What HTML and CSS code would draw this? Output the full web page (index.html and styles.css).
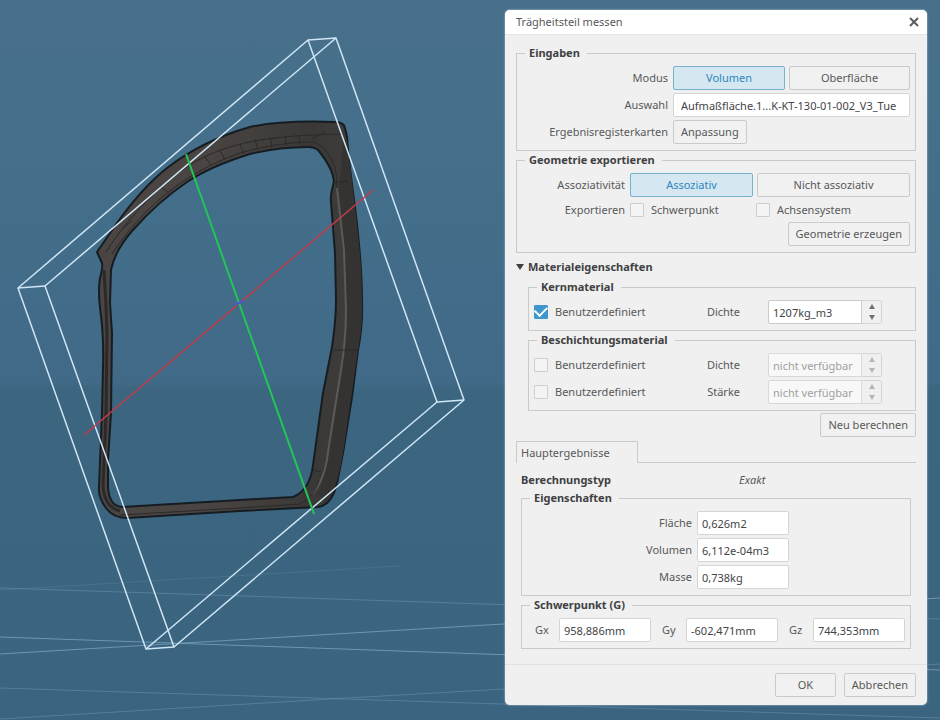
FILE: index.html
```html
<!DOCTYPE html>
<html lang="de">
<head>
  <meta charset="UTF-8">
  <meta name="viewport" content="width=device-width, initial-scale=1.0">
  <title>Trägheitsteil messen</title>
  <link rel="stylesheet" href="styles.css">
</head>
<body>
  <main class="viewport">
    <!-- 3D view: floor grid, door frame, bounding box and inertia axes -->
    <svg class="scene" viewBox="0 0 940 720" preserveAspectRatio="xMinYMin slice" aria-hidden="true">
      <defs>
        <linearGradient id="arch" x1="0" y1="0" x2="1" y2="0">
          <stop offset="0" stop-color="#4a4542"/>
          <stop offset="0.4" stop-color="#4a4542"/>
          <stop offset="0.8" stop-color="#3a3837"/>
          <stop offset="1" stop-color="#403e3d"/>
        </linearGradient>
      </defs>
      <g class="grid">
        <path class="faint" d="M0 590L400 566"/>
        <path d="M0 588L940 619"/>
        <path class="strong" d="M0 637L940 670"/>
        <path class="strong" d="M0 654L940 598"/>
        <path d="M0 688L940 718"/>
        <path d="M0 719L330 699L940 664"/>
      </g>
      <g class="frame">
        <path class="body" fill="url(#arch)" fill-rule="evenodd" d="M97 252L117 223C132 202 148 183 167 168C193 148 222 135 250 127C277 121 305 121 335 122Q344 122 345 128L347 137C349 165 352 185 355 207C359 240 362 270 362 300Q363 325 358 350L352 397L343 453L337 483Q332 505 318 507L240 511L127 518Q113 518 106 508Q98 497 99 487L102 413L103 367Q104 335 100 308Q98 290 100 278Q103 268 102 263Z
          M250 154C224 162 205 170 187 182C165 197 148 213 133 230Q115 250 111 270L110 303L112 333L111 413L108 460V487Q109 506 122 507L240 500L293 497Q310 490 313 465L323 393L332 347Q336 320 336 300L335 253L331 202Q330 196 334 182Q333 168 318 150Q314 147 308 147Q278 147 250 154Z"/>
        <path class="dark" d="M343 140L347 139L355 207C359 240 362 270 362 300Q363 325 358 350L343 453Q337 490 326 503L318 494Q325 480 328 452L341 370Q346 340 346 310L344 250L339 190Z"/>
        <path class="light" d="M337 188L344 250L346 310Q346 340 341 370L328 452Q325 480 312 494"/>
        <path class="ridge" d="M106 252C125 222 152 192 185 168C215 148 250 138 312 135L343 134"/>
        <path class="ridge" d="M112 254C140 212 180 174 240 153Q275 143 308 142Q318 141 326 151Q338 164 337 188"/>
        <path class="ridge side" d="M104 270Q106 300 107 333L106 413L103 485Q104 507 120 511"/>
        <path class="ridge" d="M120 515L240 508L300 504Q314 497 319 480"/>
        <path class="ridge" d="M332 183L348 181M334 350H358M312 139L325 132M313 470L321 472M122 229L132 221M160 186L169 193M205 157L211 165M220 150L225 160M240 144L244 154M255 139L258 150M270 137L272 148M285 136L286 146M299 135L300 145"/>
      </g>
      <g class="bbox">
        <path d="M18 288L308 40L437 402L146 649Z"/>
        <path d="M45 286L336 38L464 400L174 647Z"/>
        <path d="M18 288L45 286M308 40L336 38M437 402L464 400M146 649L174 647"/>
      </g>
      <path class="axis-x" d="M373 190L84 435"/>
      <path class="axis-y" d="M186 154L314 514"/>
      <path class="axis-z" d="M235 305L243 301"/>
    </svg>

    <form class="dialog" role="dialog" aria-labelledby="dialogTitle">
      <header class="titlebar">
        <h1 id="dialogTitle">Trägheitsteil messen</h1>
        <button type="button" class="close" aria-label="Schließen">
          <svg viewBox="0 0 10 10" width="10" height="10"><path d="M1 1L9 9M9 1L1 9"/></svg>
        </button>
      </header>

      <div class="content">
        <fieldset class="inputs">
          <legend>Eingaben</legend>
          <span class="label">Modus</span>
          <div class="segmented">
            <button type="button" class="btn active" aria-pressed="true">Volumen</button>
            <button type="button" class="btn" aria-pressed="false">Oberfläche</button>
          </div>
          <label class="label" for="selection">Auswahl</label>
          <input type="text" id="selection" class="selection" value="Aufmaßfläche.1...K-KT-130-01-002_V3_Tue">
          <span class="label">Ergebnisregisterkarten</span>
          <div><button type="button" class="btn">Anpassung</button></div>
        </fieldset>

        <fieldset class="export">
          <legend>Geometrie exportieren</legend>
          <span class="label">Assoziativität</span>
          <div class="segmented">
            <button type="button" class="btn active" aria-pressed="true">Assoziativ</button>
            <button type="button" class="btn" aria-pressed="false">Nicht assoziativ</button>
          </div>
          <span class="label">Exportieren</span>
          <div class="checks">
            <label class="check"><input type="checkbox">Schwerpunkt</label>
            <label class="check"><input type="checkbox">Achsensystem</label>
          </div>
          <div class="actions"><button type="button" class="btn">Geometrie erzeugen</button></div>
        </fieldset>

        <details class="material" open>
          <summary>Materialeigenschaften</summary>
          <fieldset class="rows">
            <legend>Kernmaterial</legend>
            <div class="material-row">
              <label class="check"><input type="checkbox" checked>Benutzerdefiniert</label>
              <label class="label" for="coreDensity">Dichte</label>
              <div class="spin">
                <input type="text" id="coreDensity" value="1207kg_m3">
                <div class="arrows">
                  <button type="button" class="up" aria-label="Erhöhen"></button>
                  <button type="button" class="down" aria-label="Verringern"></button>
                </div>
              </div>
            </div>
          </fieldset>
          <fieldset class="rows">
            <legend>Beschichtungsmaterial</legend>
            <div class="material-row">
              <label class="check"><input type="checkbox">Benutzerdefiniert</label>
              <label class="label" for="coatDensity">Dichte</label>
              <div class="spin">
                <input type="text" id="coatDensity" value="nicht verfügbar" disabled>
                <div class="arrows">
                  <button type="button" class="up" aria-label="Erhöhen" disabled></button>
                  <button type="button" class="down" aria-label="Verringern" disabled></button>
                </div>
              </div>
            </div>
            <div class="material-row">
              <label class="check"><input type="checkbox">Benutzerdefiniert</label>
              <label class="label" for="coatThickness">Stärke</label>
              <div class="spin">
                <input type="text" id="coatThickness" value="nicht verfügbar" disabled>
                <div class="arrows">
                  <button type="button" class="up" aria-label="Erhöhen" disabled></button>
                  <button type="button" class="down" aria-label="Verringern" disabled></button>
                </div>
              </div>
            </div>
          </fieldset>
          <div class="actions"><button type="button" class="btn">Neu berechnen</button></div>
        </details>

        <div class="tabs" role="tablist">
          <button type="button" class="tab" role="tab" aria-selected="true">Hauptergebnisse</button>
        </div>

        <div class="results" role="tabpanel">
          <p class="calc-type"><strong>Berechnungstyp</strong><em>Exakt</em></p>
          <fieldset class="properties">
            <legend>Eigenschaften</legend>
            <label class="label" for="area">Fläche</label>
            <input type="text" id="area" value="0,626m2" readonly>
            <label class="label" for="volume">Volumen</label>
            <input type="text" id="volume" value="6,112e-04m3" readonly>
            <label class="label" for="mass">Masse</label>
            <input type="text" id="mass" value="0,738kg" readonly>
          </fieldset>
          <fieldset>
            <legend>Schwerpunkt (G)</legend>
            <div class="gravity">
              <label class="axis">Gx <input type="text" value="958,886mm" readonly></label>
              <label class="axis">Gy <input type="text" value="-602,471mm" readonly></label>
              <label class="axis">Gz <input type="text" value="744,353mm" readonly></label>
            </div>
          </fieldset>
        </div>
      </div>

      <footer class="footer">
        <button type="button" class="btn ok">OK</button>
        <button type="button" class="btn">Abbrechen</button>
      </footer>
    </form>
  </main>
</body>
</html>
```
FILE: styles.css
```css
:root {
  --panel: #f0f0f0;
  --line: #c9cbcb;
  --text: #585959;
  --strong: #404142;
  --blue: #2f86bd;
}

* {
  box-sizing: border-box;
}

body {
  margin: 0;
  background: #3b637f;
  color: var(--text);
  font: 11px/16px "Noto Sans", "Open Sans", sans-serif;
}

/* The dialog and the 3D view share one grid cell */
.viewport {
  display: grid;
  min-height: 100vh;
  overflow: hidden;
  background: linear-gradient(#48708b, #436e8a 30%, #406a87 53%, #3c6580 54%, #3b6480);
}
.scene,
.dialog {
  grid-area: 1 / 1;
}
.scene {
  width: 100%;
  height: 100vh;
}
.scene path {
  stroke-linejoin: round;
}
.grid path {
  fill: none;
  stroke: #6890aa;
  stroke-opacity: 0.6;
}
.grid .faint {
  stroke-opacity: 0.3;
}
.grid .strong {
  stroke: #7ba2bb;
  stroke-opacity: 0.8;
}
.frame .body {
  stroke: #161d22;
  stroke-width: 2;
}
.frame .dark {
  fill: #353332;
}
.frame .light {
  fill: none;
  stroke: #5c5957;
  stroke-width: 2;
}
.frame .ridge {
  fill: none;
  stroke: #2b2929;
}
.frame .side {
  stroke-width: 3;
}
.bbox path {
  fill: none;
  stroke: #cfe6f5;
  stroke-width: 1.5;
}
.axis-x {
  stroke: #c43b49;
  stroke-width: 1.5;
}
.axis-y {
  stroke: #22c654;
  stroke-width: 2;
}
.axis-z {
  stroke: #4a55d8;
  stroke-width: 2;
}

/* Dialog */
.dialog {
  justify-self: end;
  align-self: start;
  width: 422px;
  max-width: 100%;
  margin: 10px 13px 10px 0;
  background: var(--panel);
  border-radius: 5px;
  overflow: hidden;
  box-shadow: 0 0 2px #c4dcea;
}
.titlebar {
  display: flex;
  align-items: center;
  justify-content: space-between;
  height: 25px;
  padding: 0 8px 0 11px;
  background: #fff;
  border-bottom: 1px solid #e6e6e6;
}
.titlebar h1 {
  margin: 0;
  font-size: 11px;
  font-weight: normal;
}
.close {
  display: flex;
  padding: 0;
  border: 0;
  background: none;
}
.close path {
  fill: none;
  stroke: #5b5c5d;
  stroke-width: 2;
}
.content {
  padding: 10px 11px 14px;
}

/* Groups */
fieldset {
  min-width: 0;
  margin: 0 0 1px;
  padding: 5px 5px 6px;
  border: 1px solid var(--line);
}
legend {
  margin-left: 3px;
  padding: 0 7px 0 4px;
}
legend,
summary,
strong {
  color: var(--strong);
  font-weight: bold;
}
.inputs,
.export,
.properties {
  display: grid;
  gap: 3px 5px;
  align-items: center;
}
.inputs {
  grid-template-columns: 146px 1fr;
}
.export {
  grid-template-columns: 103px 1fr;
}
.properties {
  grid-template-columns: 165px 92px;
}
.rows {
  display: flex;
  flex-direction: column;
  gap: 3px;
}
.label {
  text-align: right;
}

/* Controls */
button,
input {
  font: inherit;
  color: inherit;
}
.btn {
  display: block;
  height: 24px;
  padding: 0 7px;
  border: 1px solid var(--line);
  border-radius: 2px;
  background: #f1f1f1;
}
.btn.active {
  border-color: #78b0d0;
  background: #d5e8f2;
  color: var(--blue);
}
.segmented {
  display: flex;
  gap: 4px;
}
.segmented .btn {
  flex: 1;
}
.inputs .active {
  flex: 0 0 112px;
}
.export .active {
  flex: 0 0 123px;
}
input[type="text"] {
  width: 100%;
  min-width: 0;
  height: 24px;
  padding: 0 4px;
  border: 1px solid #d4d5d5;
  border-radius: 2px;
  background: #fff;
  color: #434445;
}
input.selection {
  padding: 0 0 0 7px;
}
.check {
  display: flex;
  align-items: center;
  gap: 7px;
}
.check input {
  appearance: none;
  display: grid;
  place-items: center;
  width: 14px;
  height: 14px;
  margin: 0;
  border: 1px solid #cdcfcf;
  border-radius: 1px;
  background: #f4f4f4;
}
.check input:checked {
  border-color: #3f97cc;
  background: #3f97cc;
}
.check input:checked::before {
  content: "";
  width: 10px;
  height: 6px;
  margin-bottom: 4px;
  border: solid #fff;
  border-width: 0 0 2px 2px;
  transform: rotate(-45deg);
}
.checks {
  display: grid;
  grid-template-columns: 122px 1fr;
  gap: 4px;
  height: 19px;
}
.actions {
  display: flex;
  justify-content: flex-end;
}
.export .actions {
  grid-column: 1 / -1;
}

/* Material */
.material {
  margin: 6px 0 4px;
}
.material fieldset {
  margin-left: 12px;
}
.material .actions {
  margin-top: 2px;
}
summary {
  display: flex;
  align-items: center;
  gap: 4px;
  margin-bottom: 4px;
}
summary::before {
  content: "";
  border: 4px solid transparent;
  border-top: 6px solid var(--strong);
  border-bottom: 0;
}
.material-row {
  display: grid;
  grid-template-columns: 122px 56px 114px;
  column-gap: 28px;
  align-items: center;
}
.spin {
  display: flex;
}
.spin input[type="text"] {
  flex: 1;
  border-color: var(--line);
  border-radius: 2px 0 0 2px;
}
.spin input[type="text"]:disabled {
  border-color: #d8d9d9;
  background: #f8f8f8;
  color: #a0a1a2;
}
.arrows {
  display: flex;
  flex-direction: column;
  width: 20px;
  border: 1px solid #d4d5d5;
  border-left: 0;
  border-radius: 0 2px 2px 0;
}
.arrows button {
  flex: 1;
  display: grid;
  place-items: center;
  padding: 0;
  border: 0;
  background: none;
  color: #707172;
}
.arrows button:disabled {
  color: #b5b6b7;
}
.arrows button::before {
  content: "";
  border: 3px solid transparent;
}
.arrows .up::before {
  border-top: 0;
  border-bottom: 5px solid currentColor;
}
.arrows .down::before {
  border-bottom: 0;
  border-top: 5px solid currentColor;
}

/* Results */
.tabs {
  display: flex;
}
.tabs::after {
  content: "";
  flex: 1;
  border-bottom: 1px solid var(--line);
}
.tab {
  width: 122px;
  height: 22px;
  padding: 0 4px;
  border: 1px solid var(--line);
  border-bottom: 0;
  background: none;
  text-align: left;
}
.results {
  padding: 9px 5px 0;
}
.calc-type {
  display: grid;
  grid-template-columns: 218px 1fr;
  margin: 0 0 2px;
}
.gravity {
  display: flex;
  gap: 11px;
  padding-left: 8px;
}
.axis {
  display: grid;
  grid-template-columns: 14px 92px;
  gap: 10px;
  align-items: center;
}

.footer {
  display: flex;
  justify-content: flex-end;
  gap: 8px;
  padding: 8px 11px;
  border-top: 1px solid #e0e1e1;
}
.ok {
  width: 61px;
}
```
